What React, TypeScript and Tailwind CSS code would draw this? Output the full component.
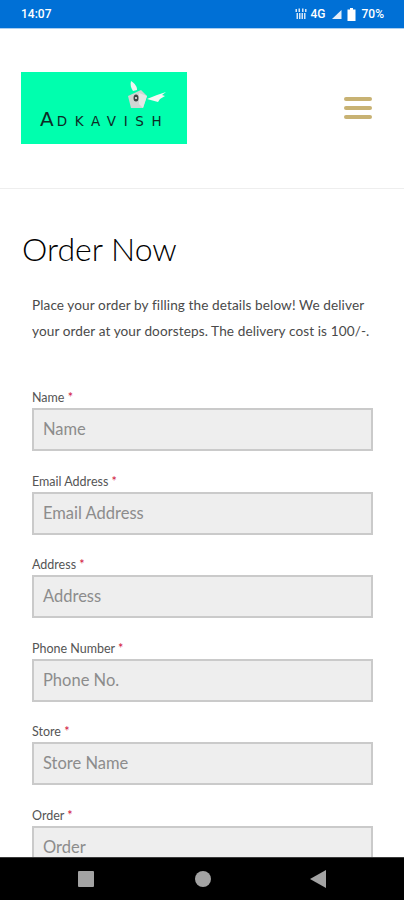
import React from 'react';

const fields = [
  { label: 'Name', placeholder: 'Name' },
  { label: 'Email Address', placeholder: 'Email Address' },
  { label: 'Address', placeholder: 'Address' },
  { label: 'Phone Number', placeholder: 'Phone No.' },
  { label: 'Store', placeholder: 'Store Name' },
  { label: 'Order', placeholder: 'Order' },
];

function StatusBar() {
  return (
    <div className="h-[29px] bg-[#0070d6] border-b border-[#a9cdf0] flex items-center justify-between pl-[21px] pr-[20px] text-white text-[12px] font-medium font-['Roboto',sans-serif] shrink-0">
      <span>14:07</span>
      <div className="flex items-center gap-[4px]">
        <svg width="12" height="12" viewBox="0 0 12 12" fill="#d5e6f7">
          <rect x="0.5" y="1" width="1.5" height="3" />
          <rect x="3.5" y="0.5" width="1.5" height="3.5" />
          <rect x="7" y="0.5" width="1.5" height="3.5" />
          <rect x="10" y="1" width="1.5" height="3" />
          <rect x="1.5" y="5" width="1.5" height="6" />
          <rect x="4" y="5" width="1.5" height="6" />
          <rect x="6.5" y="5" width="1.5" height="6" />
          <rect x="9" y="5" width="1.5" height="6" />
        </svg>
        <span>4G</span>
        <svg width="11" height="11" viewBox="0 0 11 11" fill="#e3eefa" className="ml-[1px]">
          <path d="M10.5 1 V10 H1 Z" />
        </svg>
        <svg width="9" height="13" viewBox="0 0 9 13" fill="white" className="ml-[1px]">
          <path d="M3 0 H6 V1.5 H8.5 V13 H0.5 V1.5 H3 Z" />
        </svg>
        <span className="ml-[2px]">70%</span>
      </div>
    </div>
  );
}

function Logo() {
  return (
    <div className="relative w-[166px] h-[72px] bg-[#00ffae]">
      <svg width="42" height="40" viewBox="0 0 42 40" className="absolute left-[105px] top-[7px]">
        <path d="M5 2 C9 5 11 7 11 11 L7 12 C5 9 4 6 5 2 Z" fill="#eef5f1" />
        <path d="M21 20 L31 16 L40 13 L36 16 L39 17 L34 20 L32 23 Z" fill="#f4f8f5" />
        <path d="M2 17 L15 11 L21 17 L17 29 L5 29 Z" fill="#cfd6d3" />
        <path d="M13 14 L21 17 L17 29 L13 25 Z" fill="#e4e8e6" />
        <ellipse cx="10" cy="19" rx="2.5" ry="3.5" fill="#3c4442" />
        <circle cx="10" cy="19" r="1.1" fill="#e8ecea" />
      </svg>
      <div className="absolute left-[19px] top-[35px] text-[#0d2b25] text-[13.5px] leading-[24px] tracking-[7.6px] font-['DejaVu_Sans',sans-serif] whitespace-nowrap">
        <span className="text-[20px] tracking-[3px]">A</span>DKAVISH
      </div>
    </div>
  );
}

function Field({ label, placeholder }: { label: string; placeholder: string }) {
  return (
    <div className="h-[83.5px]">
      <div className="h-[20px] text-[12.5px] leading-[20px] text-[#555] font-['Lato',sans-serif]">
        {label} <span className="text-[#d0103a]">*</span>
      </div>
      <div className="h-[43px] bg-[#eeeeee] border-2 border-[#cacaca] pl-[9px] flex items-center text-[16.5px] text-[#8c8c8c] font-['Lato',sans-serif]">
        {placeholder}
      </div>
    </div>
  );
}

export default function App() {
  return (
    <div className="relative h-[900px] w-[404px] overflow-hidden bg-white flex flex-col font-['Lato',sans-serif]">
      <StatusBar />
      <header className="h-[160px] shrink-0 border-b border-[#eeeeee] flex items-center justify-between pl-[21px] pr-[32px] pb-[1px]">
        <Logo />
        <div className="flex flex-col gap-[5px] w-[28px]">
          <div className="h-[4px] rounded-full bg-[#c8b273]" />
          <div className="h-[4px] rounded-full bg-[#c8b273]" />
          <div className="h-[4px] rounded-full bg-[#c8b273]" />
        </div>
      </header>
      <main className="flex-1">
        <h1 className="ml-[22px] mt-[40px] text-[32px] leading-[40px] font-light text-black">Order Now</h1>
        <p className="ml-[32px] mt-[23px] w-[345px] text-[13.6px] tracking-[0.1px] leading-[26px] text-[#4a4a4a]">
          Place your order by filling the details below! We deliver your order at your doorsteps. The delivery cost is 100/-.
        </p>
        <form className="ml-[32px] mr-[31px] mt-[44px]">
          {fields.map((f) => (
            <Field key={f.label} label={f.label} placeholder={f.placeholder} />
          ))}
        </form>
      </main>
      <nav className="absolute bottom-0 left-0 right-0 h-[43px] bg-black border-t border-[#3a3a3a] flex items-center justify-between pl-[78px] pr-[78px]">
        <div className="w-[16px] h-[16px] rounded-[1px] bg-[#a3a3a3]" />
        <div className="ml-[1px] w-[16px] h-[16px] rounded-full bg-[#a3a3a3]" />
        <svg width="16" height="18" viewBox="0 0 16 18" fill="#a3a3a3">
          <path d="M16 0 V18 L0 9 Z" />
        </svg>
      </nav>
    </div>
  );
}
